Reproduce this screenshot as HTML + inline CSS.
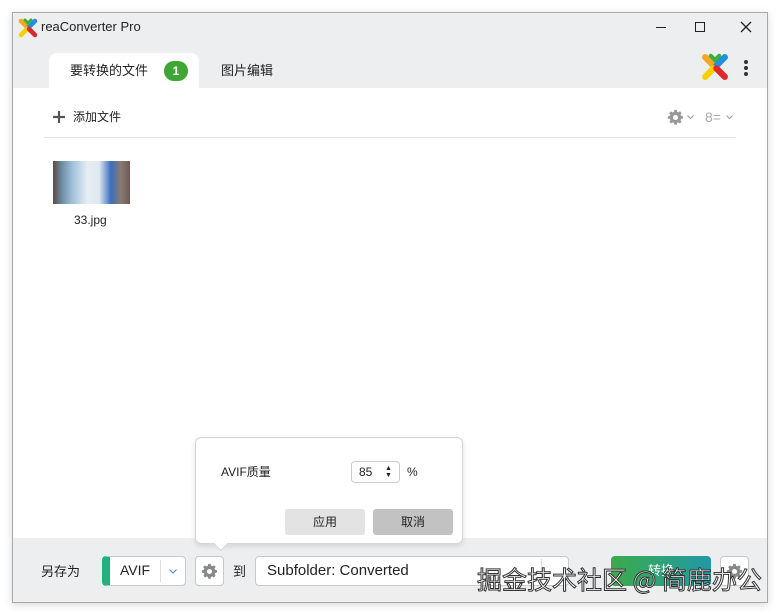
<!DOCTYPE html>
<html><head><meta charset="utf-8"><style>
*{margin:0;padding:0;box-sizing:border-box}
body{width:780px;height:615px;background:#fff;position:relative;overflow:hidden;font-family:"Liberation Sans","Noto Sans CJK SC",sans-serif;color:#222;line-height:1}
.win{position:absolute;left:12px;top:12px;width:756px;height:591px;border:1px solid #a9a9a9;background:#eceef0;box-shadow:0 2px 8px rgba(0,0,0,.15)}
.abs{position:absolute}
.content{position:absolute;left:0;top:75px;width:754px;height:450px;background:#fff}
.tab{position:absolute;left:36px;top:40px;width:150px;height:36px;background:#fff;border-radius:8px 8px 0 0}
.btn{position:absolute;border:1px solid #c8c8c8;border-radius:4px;background:#fff}
</style></head><body>
<svg width="0" height="0" style="position:absolute"><defs>
<g id="logo">
<path d="M3 3 L9 9" stroke="#f5a623" stroke-width="4.5" stroke-linecap="round"/>
<path d="M17 3 L11 9" stroke="#1f8fe0" stroke-width="4.5" stroke-linecap="round"/>
<path d="M3 17 L9 11" stroke="#f5d000" stroke-width="4.5" stroke-linecap="round"/>
<path d="M17 17 L11 11" stroke="#e02828" stroke-width="4.5" stroke-linecap="round"/>
<path d="M7 2 L10 5 L13 2" stroke="#3cae3c" stroke-width="3" fill="none" stroke-linecap="round"/>
</g>
<g id="gear"><path fill="currentColor" fill-rule="evenodd" d="M8.6 1h2.8l.4 2.2 1.5.7 1.9-1.3 2 2-1.3 1.9.7 1.5 2.2.4v2.8l-2.2.4-.7 1.5 1.3 1.9-2 2-1.9-1.3-1.5.7-.4 2.2H8.6l-.4-2.2-1.5-.7-1.9 1.3-2-2 1.3-1.9-.7-1.5L1 11.4V8.6l2.2-.4.7-1.5-1.3-1.9 2-2 1.9 1.3 1.5-.7zM10 7a3 3 0 100 6 3 3 0 000-6z"/></g>
</defs></svg>
<div class="win">
  <svg class="abs" style="left:5px;top:5px" width="20" height="20" viewBox="0 0 20 20"><use href="#logo"/></svg>
  <div class="abs" style="left:28px;top:7px;font-size:13px">reaConverter Pro</div>
  <div class="abs" style="left:643px;top:14px;width:10px;height:1px;background:#222"></div>
  <div class="abs" style="left:682px;top:9px;width:10px;height:10px;border:1px solid #222"></div>
  <svg class="abs" style="left:727px;top:8px" width="12" height="12"><path d="M1 1L11 11M11 1L1 11" stroke="#222" stroke-width="1.3"/></svg>
  <div class="tab"></div>
  <div class="abs" style="left:57px;top:51px;font-size:13px">要转换的文件</div>
  <div class="abs" style="left:151px;top:48px;width:24px;height:20px;border-radius:10px;background:#3fa535;color:#fff;font-size:12px;font-weight:bold;text-align:center;line-height:20px">1</div>
  <div class="abs" style="left:208px;top:51px;font-size:13px">图片编辑</div>
  <svg class="abs" style="left:688px;top:40px" width="28" height="28" viewBox="0 0 20 20"><use href="#logo"/></svg>
  <div class="abs" style="left:731px;top:47px;width:4px;height:4px;border-radius:2px;background:#333;box-shadow:0 6px 0 #333,0 12px 0 #333"></div>
  <div class="content">
    <svg class="abs" style="left:40px;top:23px" width="12" height="12"><path d="M6 0V12M0 6H12" stroke="#555" stroke-width="2.2"/></svg>
    <div class="abs" style="left:60px;top:23px;font-size:12px">添加文件</div>
    <svg class="abs" style="left:654px;top:21px;color:#999" width="17" height="17" viewBox="0 0 20 20"><use href="#gear"/></svg>
    <svg class="abs" style="left:674px;top:27px" width="7" height="5"><path d="M.5.5L3.5 3.5 6.5.5" stroke="#999" fill="none"/></svg>
    <div class="abs" style="left:692px;top:22px;font-size:14px;color:#aaa">8=</div>
    <svg class="abs" style="left:713px;top:27px" width="7" height="5"><path d="M.5.5L3.5 3.5 6.5.5" stroke="#999" fill="none"/></svg>
    <div class="abs" style="left:31px;top:49px;width:692px;height:1px;background:#e6e6e6"></div>
    <div class="abs" style="left:40px;top:73px;width:77px;height:43px;background:linear-gradient(90deg,#5b4a44,#6f8fa8 12%,#9fc0d8 25%,#e6eef4 45%,#dfe8ef 60%,#3a6fc0 75%,#8a7a70 88%,#6b5a54)"></div>
    <div class="abs" style="left:61px;top:126px;font-size:12px">33.jpg</div>
  </div>
  <div class="abs" style="left:28px;top:552px;font-size:13px">另存为</div>
  <div class="btn" style="left:89px;top:543px;width:84px;height:30px;border-left:8px solid #1fb27a"></div>
  <div class="abs" style="left:107px;top:550px;font-size:14px">AVIF</div>
  <div class="abs" style="left:147px;top:547px;width:1px;height:22px;background:#ddd"></div>
  <svg class="abs" style="left:156px;top:556px" width="8" height="5"><path d="M.5.5L4 4 7.5.5" stroke="#4a7fd0" fill="none"/></svg>
  <div class="btn" style="left:182px;top:543px;width:29px;height:30px"></div>
  <svg class="abs" style="left:188px;top:550px;color:#888" width="17" height="17" viewBox="0 0 20 20"><use href="#gear"/></svg>
  <div class="abs" style="left:220px;top:552px;font-size:13px">到</div>
  <div class="btn" style="left:242px;top:543px;width:314px;height:30px"></div>
  <div class="abs" style="left:254px;top:550px;font-size:15px">Subfolder: Converted</div>
  <div class="abs" style="left:528px;top:546px;width:1px;height:24px;background:#ddd"></div>
  <div class="abs" style="left:598px;top:543px;width:100px;height:30px;border-radius:4px;background:linear-gradient(90deg,#3daa4a,#2199a8);color:#fff;font-size:13px;text-align:center;line-height:30px">转换</div>
  <div class="btn" style="left:707px;top:543px;width:29px;height:30px"></div>
  <svg class="abs" style="left:713px;top:550px;color:#888" width="17" height="17" viewBox="0 0 20 20"><use href="#gear"/></svg>
  <div class="abs" style="left:182px;top:424px;width:268px;height:107px;background:#fff;border:1px solid #d6d6d6;border-radius:6px;box-shadow:0 2px 6px rgba(0,0,0,.12)"></div>
  <div class="abs" style="left:203px;top:526px;width:10px;height:10px;background:#fff;transform:rotate(45deg);border-right:1px solid #d6d6d6;border-bottom:1px solid #d6d6d6"></div>
  <div class="abs" style="left:208px;top:453px;font-size:12px">AVIF质量</div>
  <div class="abs" style="left:338px;top:448px;width:49px;height:22px;border:1px solid #ccc;border-radius:4px;font-size:12px;padding:4px 0 0 7px">85<span style="position:absolute;left:33px;top:3px;font-size:7px;line-height:7px">▲<br>▼</span></div>
  <div class="abs" style="left:394px;top:453px;font-size:12px">%</div>
  <div class="abs" style="left:272px;top:496px;width:80px;height:26px;background:#e3e3e3;border-radius:3px;font-size:12px;text-align:center;line-height:26px">应用</div>
  <div class="abs" style="left:360px;top:496px;width:80px;height:26px;background:#c2c2c2;border-radius:3px;font-size:12px;text-align:center;line-height:26px">取消</div>
</div>
<div class="abs" style="left:477px;top:567px;font-size:25px;color:#fff;-webkit-text-stroke:1px #333;font-family:'Noto Sans CJK SC',sans-serif;white-space:nowrap">掘金技术社区 @ 简鹿办公</div>
</body></html>
